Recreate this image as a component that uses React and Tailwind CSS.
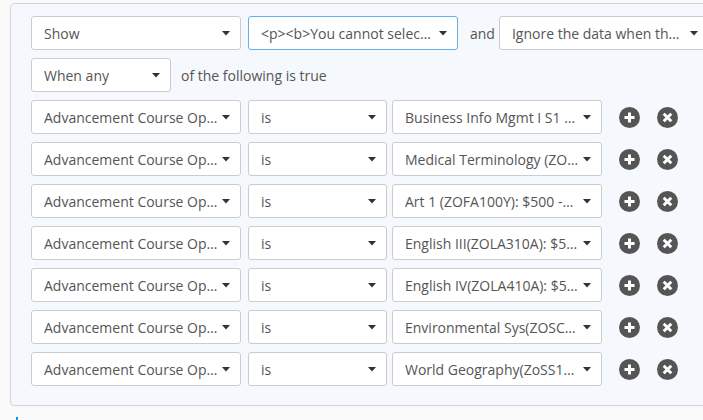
import React from "react";

const font = { fontFamily: '"Open Sans", "Liberation Sans", sans-serif' };

function Caret() {
  return (
    <svg width="8" height="5" viewBox="0 0 8 5" className="shrink-0">
      <path d="M0 0 L8 0 L4 4.5 Z" fill="#333" />
    </svg>
  );
}

// text is already shortened the way the widget shows it
function Select({ value, width, focus }) {
  return (
    <div
      className={`flex h-[34px] shrink-0 items-center gap-[2px] rounded-[3px] border bg-white pl-[12px] pr-[10px] text-[14px] text-[#555] ${
        focus ? "border-[#66afe9]" : "border-[#cccccc]"
      } ${width}`}
    >
      <span className="min-w-0 flex-1 overflow-hidden whitespace-nowrap">{value}</span>
      <Caret />
    </div>
  );
}

function PlusIcon() {
  return (
    <svg width="21" height="21" viewBox="0 0 20 20">
      <circle cx="10" cy="10" r="10" fill="#555" />
      <path d="M10 5.2 V14.8 M5.2 10 H14.8" stroke="#fff" strokeWidth="2.8" />
    </svg>
  );
}

function RemoveIcon() {
  return (
    <svg width="21" height="21" viewBox="0 0 20 20">
      <circle cx="10" cy="10" r="10" fill="#555" />
      <path d="M6.4 6.4 L13.6 13.6 M13.6 6.4 L6.4 13.6" stroke="#fff" strokeWidth="2.8" />
    </svg>
  );
}

const courses = [
  "Business Info Mgmt I S1 …",
  "Medical Terminology (ZO…",
  "Art 1 (ZOFA100Y): $500 -…",
  "English III(ZOLA310A): $5…",
  "English IV(ZOLA410A): $5…",
  "Environmental Sys(ZOSC…",
  "World Geography(ZoSS1…",
];

export default function App() {
  return (
    <div className="h-[420px] w-[703px] overflow-hidden bg-[#fafafa]" style={font}>
      <div className="ml-[10px] mt-[3px] w-[740px] rounded-[4px] border border-[#d4d4d4] bg-[#f5f9fd] pb-[19px] pl-[20px] pt-[12px]">
        <div className="flex items-center">
          <Select value="Show" width="w-[210px]" />
          <div className="ml-[7px]">
            <Select value="<p><b>You cannot selec…" width="w-[210px]" focus />
          </div>
          <span className="ml-[12px] mr-[4px] text-[14px] text-[#555]">and</span>
          <Select value="Ignore the data when th…" width="w-[210px]" />
        </div>
        <div className="mt-[8px] flex items-center">
          <Select value="When any" width="w-[140px]" />
          <span className="ml-[10px] text-[14px] text-[#555]">of the following is true</span>
        </div>
        {courses.map((c) => (
          <div key={c} className="mt-[8px] flex items-center">
            <Select value="Advancement Course Op…" width="w-[210px]" />
            <div className="ml-[7px]">
              <Select value="is" width="w-[139px]" />
            </div>
            <div className="ml-[5px]">
              <Select value={c} width="w-[210px]" />
            </div>
            <div className="ml-[17px] flex items-center gap-[17px]">
              <PlusIcon />
              <RemoveIcon />
            </div>
          </div>
        ))}
      </div>
      <div className="ml-[16px] mt-[11px] h-[6px] w-[2px] bg-[#1a8fe3]" />
    </div>
  );
}
